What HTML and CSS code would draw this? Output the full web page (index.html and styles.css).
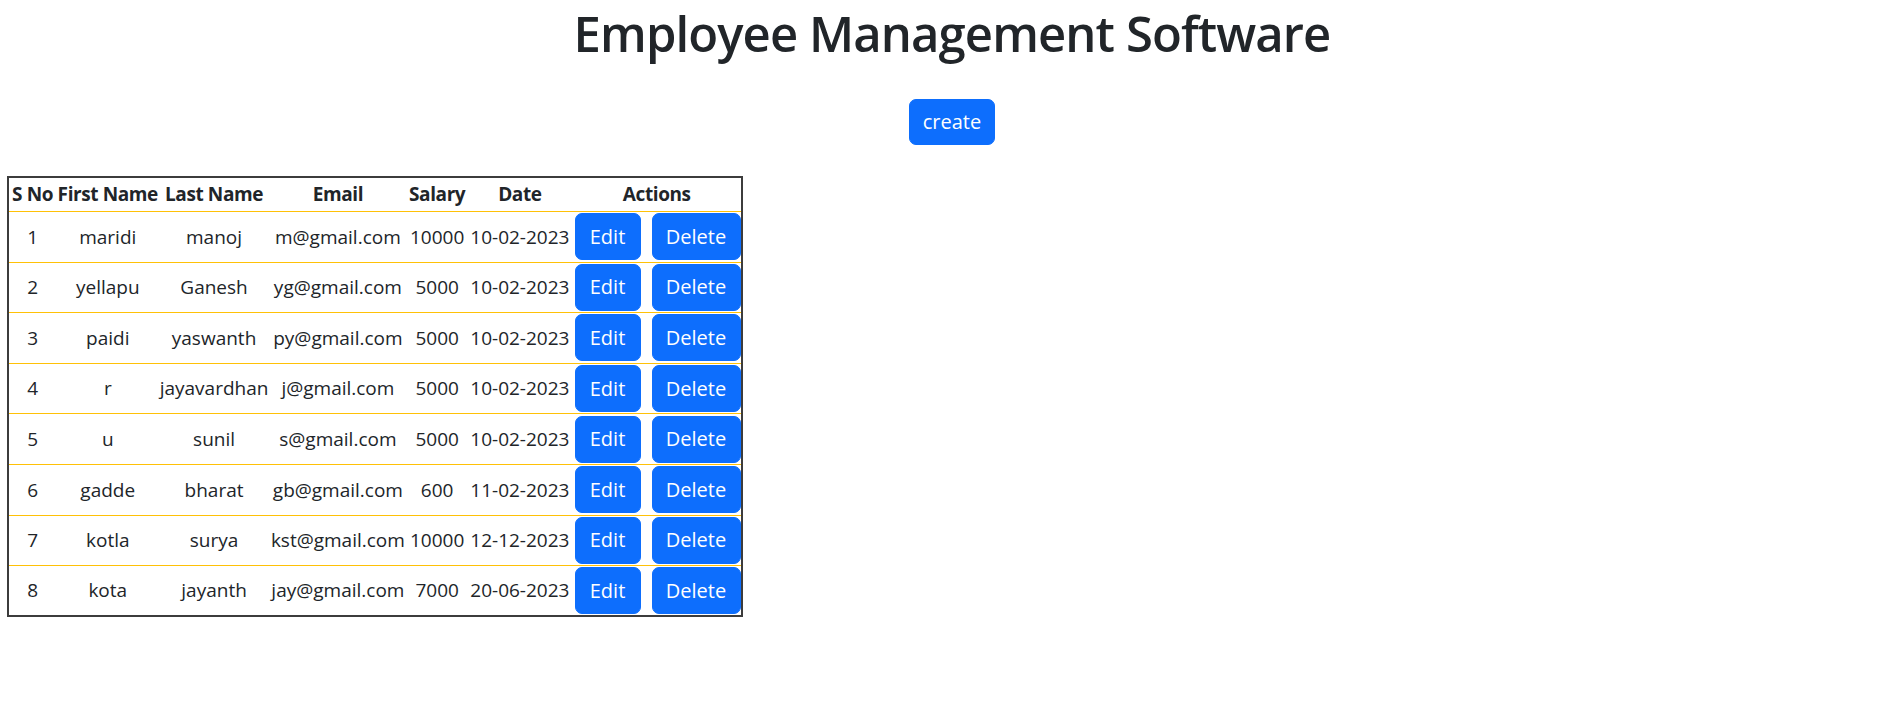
FILE: index.html
```html
<!DOCTYPE html>
<html lang="en">
<head>
<meta charset="utf-8">
<title>Employee Management Software</title>
<link rel="stylesheet" href="styles.css">
</head>
<body>
  <h1 class="page-title">Employee Management Software</h1>
  <div class="toolbar">
    <button class="btn btn-create">create</button>
  </div>
  <table class="emp-table">
    <colgroup>
      <col class="c-sno">
      <col class="c-first">
      <col class="c-last">
      <col class="c-email">
      <col class="c-salary">
      <col class="c-date">
      <col class="c-actions">
    </colgroup>
    <thead>
      <tr>
        <th>S No</th>
        <th>First Name</th>
        <th>Last Name</th>
        <th>Email</th>
        <th>Salary</th>
        <th>Date</th>
        <th>Actions</th>
      </tr>
    </thead>
    <tbody>
      <tr><td>1</td><td>maridi</td><td>manoj</td><td>m@gmail.com</td><td>10000</td><td>10-02-2023</td><td><div class="actions"><button class="btn btn-edit">Edit</button><button class="btn btn-delete">Delete</button></div></td></tr>
      <tr><td>2</td><td>yellapu</td><td>Ganesh</td><td>yg@gmail.com</td><td>5000</td><td>10-02-2023</td><td><div class="actions"><button class="btn btn-edit">Edit</button><button class="btn btn-delete">Delete</button></div></td></tr>
      <tr><td>3</td><td>paidi</td><td>yaswanth</td><td>py@gmail.com</td><td>5000</td><td>10-02-2023</td><td><div class="actions"><button class="btn btn-edit">Edit</button><button class="btn btn-delete">Delete</button></div></td></tr>
      <tr><td>4</td><td>r</td><td>jayavardhan</td><td>j@gmail.com</td><td>5000</td><td>10-02-2023</td><td><div class="actions"><button class="btn btn-edit">Edit</button><button class="btn btn-delete">Delete</button></div></td></tr>
      <tr><td>5</td><td>u</td><td>sunil</td><td>s@gmail.com</td><td>5000</td><td>10-02-2023</td><td><div class="actions"><button class="btn btn-edit">Edit</button><button class="btn btn-delete">Delete</button></div></td></tr>
      <tr><td>6</td><td>gadde</td><td>bharat</td><td>gb@gmail.com</td><td>600</td><td>11-02-2023</td><td><div class="actions"><button class="btn btn-edit">Edit</button><button class="btn btn-delete">Delete</button></div></td></tr>
      <tr><td>7</td><td>kotla</td><td>surya</td><td>kst@gmail.com</td><td>10000</td><td>12-12-2023</td><td><div class="actions"><button class="btn btn-edit">Edit</button><button class="btn btn-delete">Delete</button></div></td></tr>
      <tr><td>8</td><td>kota</td><td>jayanth</td><td>jay@gmail.com</td><td>7000</td><td>20-06-2023</td><td><div class="actions"><button class="btn btn-edit">Edit</button><button class="btn btn-delete">Delete</button></div></td></tr>
    </tbody>
  </table>
</body>
</html>
```

FILE: styles.css
```css
* { box-sizing: border-box; }

body {
  margin: 0;
  font-family: "Open Sans", "Noto Sans", sans-serif;
  font-size: 20px;
  line-height: 1.5;
  color: #212529;
  background: #fff;
}

.page-title {
  margin: 0;
  padding-left: 27px;
  font-size: 49px;
  line-height: 67px;
  font-weight: 600;
  text-align: center;
  letter-spacing: -0.9px;
}

.toolbar {
  padding: 32px 0 0 27px;
  text-align: center;
  line-height: 0;
}

.btn {
  display: inline-block;
  height: 46px;
  padding: 0;
  border: 1px solid #0d6efd;
  border-radius: 7px;
  background: #0d6efd;
  color: #fff;
  font-family: inherit;
  font-size: 20px;
  line-height: 44px;
  text-align: center;
  cursor: pointer;
}

.btn-create { width: 86px; }

.emp-table {
  margin: 31px 0 0 7px;
  width: 736px;
  table-layout: fixed;
  border-collapse: collapse;
  border: 2px solid #3c3c3c;
  font-size: 19px;
}

.c-sno { width: 48px; }
.c-first { width: 103px; }
.c-last { width: 109px; }
.c-email { width: 138px; }
.c-salary { width: 60px; }
.c-date { width: 105px; }
.c-actions { width: 169px; }

.emp-table th {
  height: 34.5px;
  padding: 0;
  font-weight: 700;
  text-align: center;
  vertical-align: middle;
  white-space: nowrap;
  border-bottom: 1px solid #ffc107;
  letter-spacing: -0.4px;
}

.emp-table td {
  height: 50.6px;
  padding: 0;
  text-align: center;
  vertical-align: middle;
  white-space: nowrap;
  border-bottom: 1px solid #ffc107;
}

.emp-table tbody tr:last-child td { border-bottom: 0; }

.actions {
  display: flex;
  gap: 11px;
  padding-left: 2px;
}

.btn-edit { width: 66px; height: 47px; }
.btn-delete { width: 89px; height: 47px; }
```
